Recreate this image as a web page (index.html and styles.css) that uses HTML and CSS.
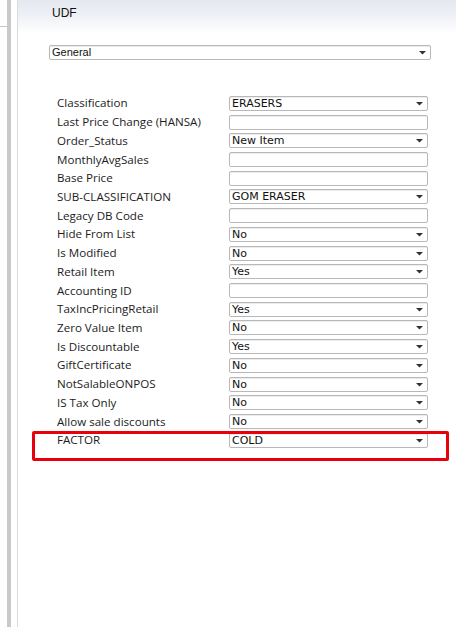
FILE: index.html
```html
<!DOCTYPE html>
<html>
<head>
<meta charset="utf-8">
<link rel="stylesheet" href="styles.css">
</head>
<body>
<div class="app">
  <div class="side">
    <div class="side-top"></div>
  </div>
  <div class="bar"></div>
  <div class="gap"></div>
  <div class="main">
    <div class="header">UDF</div>
    <div class="select wide"><span>General</span><svg class="arrow" width="7" height="4" viewBox="0 0 7 4"><path d="M0 0H7L3.5 3.5Z" fill="#333"/></svg></div>
    <div class="form">
      <div class="label">Classification</div><div class="select"><span>ERASERS</span><svg class="arrow" width="7" height="4" viewBox="0 0 7 4"><path d="M0 0H7L3.5 3.5Z" fill="#333"/></svg></div>
      <div class="label">Last Price Change (HANSA)</div><div class="input"></div>
      <div class="label">Order_Status</div><div class="select"><span>New Item</span><svg class="arrow" width="7" height="4" viewBox="0 0 7 4"><path d="M0 0H7L3.5 3.5Z" fill="#333"/></svg></div>
      <div class="label">MonthlyAvgSales</div><div class="input"></div>
      <div class="label">Base Price</div><div class="input"></div>
      <div class="label">SUB-CLASSIFICATION</div><div class="select"><span>GOM ERASER</span><svg class="arrow" width="7" height="4" viewBox="0 0 7 4"><path d="M0 0H7L3.5 3.5Z" fill="#333"/></svg></div>
      <div class="label">Legacy DB Code</div><div class="input"></div>
      <div class="label">Hide From List</div><div class="select"><span>No</span><svg class="arrow" width="7" height="4" viewBox="0 0 7 4"><path d="M0 0H7L3.5 3.5Z" fill="#333"/></svg></div>
      <div class="label">Is Modified</div><div class="select"><span>No</span><svg class="arrow" width="7" height="4" viewBox="0 0 7 4"><path d="M0 0H7L3.5 3.5Z" fill="#333"/></svg></div>
      <div class="label">Retail Item</div><div class="select"><span>Yes</span><svg class="arrow" width="7" height="4" viewBox="0 0 7 4"><path d="M0 0H7L3.5 3.5Z" fill="#333"/></svg></div>
      <div class="label">Accounting ID</div><div class="input"></div>
      <div class="label">TaxIncPricingRetail</div><div class="select"><span>Yes</span><svg class="arrow" width="7" height="4" viewBox="0 0 7 4"><path d="M0 0H7L3.5 3.5Z" fill="#333"/></svg></div>
      <div class="label">Zero Value Item</div><div class="select"><span>No</span><svg class="arrow" width="7" height="4" viewBox="0 0 7 4"><path d="M0 0H7L3.5 3.5Z" fill="#333"/></svg></div>
      <div class="label">Is Discountable</div><div class="select"><span>Yes</span><svg class="arrow" width="7" height="4" viewBox="0 0 7 4"><path d="M0 0H7L3.5 3.5Z" fill="#333"/></svg></div>
      <div class="label">GiftCertificate</div><div class="select"><span>No</span><svg class="arrow" width="7" height="4" viewBox="0 0 7 4"><path d="M0 0H7L3.5 3.5Z" fill="#333"/></svg></div>
      <div class="label">NotSalableONPOS</div><div class="select"><span>No</span><svg class="arrow" width="7" height="4" viewBox="0 0 7 4"><path d="M0 0H7L3.5 3.5Z" fill="#333"/></svg></div>
      <div class="label">IS Tax Only</div><div class="select"><span>No</span><svg class="arrow" width="7" height="4" viewBox="0 0 7 4"><path d="M0 0H7L3.5 3.5Z" fill="#333"/></svg></div>
      <div class="label">Allow sale discounts</div><div class="select"><span>No</span><svg class="arrow" width="7" height="4" viewBox="0 0 7 4"><path d="M0 0H7L3.5 3.5Z" fill="#333"/></svg></div>
      <div class="label">FACTOR</div><div class="select"><span>COLD</span><svg class="arrow" width="7" height="4" viewBox="0 0 7 4"><path d="M0 0H7L3.5 3.5Z" fill="#333"/></svg></div>
    </div>
  </div>
  <div class="highlight"></div>
</div>
</body>
</html>
```

FILE: styles.css
```css
html, body {
  margin: 0;
  padding: 0;
  background: #fff;
}
.app {
  position: relative;
  display: flex;
  height: 627px;
  width: 456px;
  overflow: hidden;
}
.side {
  width: 7px;
  flex: none;
}
.side-top {
  height: 26px;
  border-bottom: 1px solid #c4c4c4;
}
.bar {
  width: 4px;
  flex: none;
  background: #c9c9c9;
}
.gap {
  width: 6px;
  flex: none;
  border-right: 1px solid #dadada;
}
.main {
  flex: 1;
  display: flex;
  flex-direction: column;
}
.header {
  height: 33px;
  padding: 6px 0 0 34px;
  box-sizing: border-box;
  font-family: "Liberation Sans", Arial, sans-serif;
  font-size: 12px;
  line-height: 14px;
  color: #111;
  background: linear-gradient(to bottom, #e6e8f0 0%, #eef0f5 45%, #ffffff 100%);
  margin-bottom: 12px;
}
.select, .input {
  box-sizing: border-box;
  height: 15px;
  border: 1px solid #b8b8b8;
  border-radius: 2px;
  background: #fff;
  box-shadow: inset 0 1px 0 #ececec;
  display: flex;
  align-items: center;
  justify-content: space-between;
  padding: 0 4px 0 2px;
  font-family: "DejaVu Sans", Verdana, sans-serif;
  font-size: 11px;
  color: #111;
  overflow: hidden;
}
.select span {
  line-height: 13px;
}
.arrow {
  flex: none;
  margin-top: 1px;
}
.wide {
  margin-left: 31px;
  width: 382px;
  font-family: "Liberation Sans", Arial, sans-serif;
  font-size: 11px;
}
.form {
  margin-top: 34px;
  padding-left: 39px;
  display: grid;
  grid-template-columns: 172px 199px;
  grid-auto-rows: 18.72px;
  align-items: center;
}
.label {
  font-family: "Open Sans", "Segoe UI", sans-serif;
  font-size: 11.6px;
  color: #1c1c1c;
  white-space: nowrap;
  line-height: 14px;
}
.highlight {
  position: absolute;
  left: 32px;
  top: 431px;
  width: 417px;
  height: 30px;
  box-sizing: border-box;
  border: 3px solid #e8000a;
  border-radius: 2px;
}
```
